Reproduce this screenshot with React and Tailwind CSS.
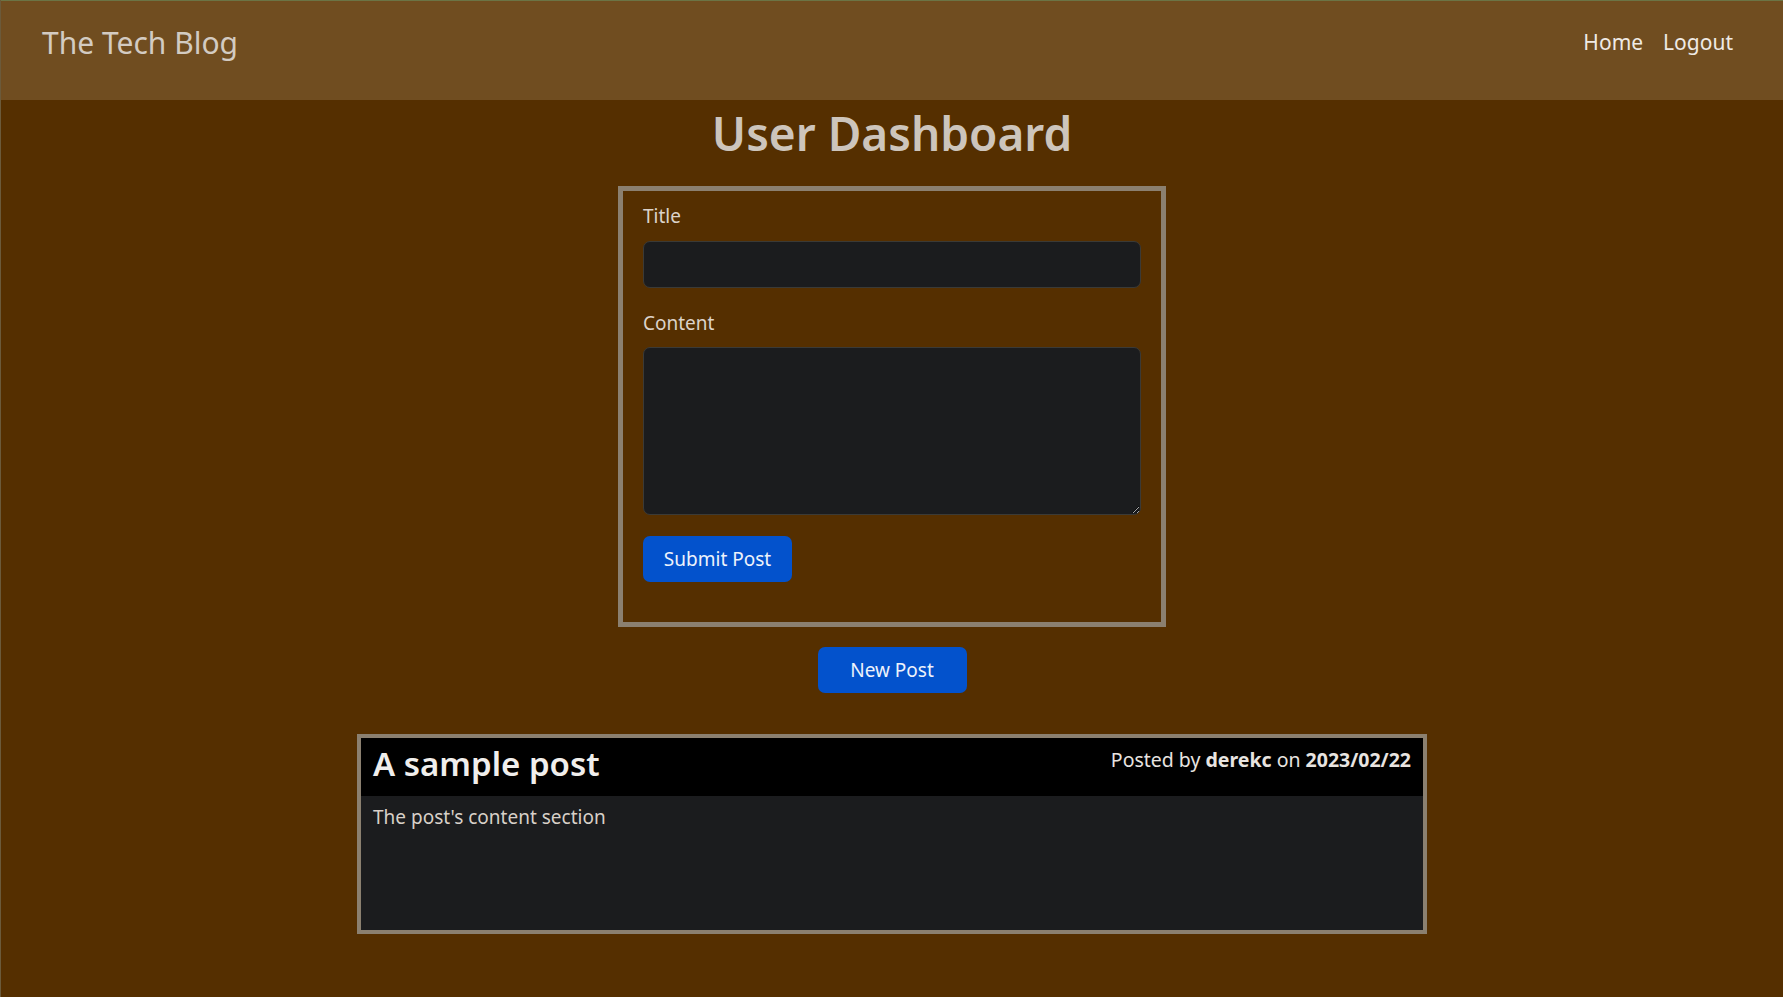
import React from 'react';

const font = { fontFamily: '"Noto Sans", "Open Sans", sans-serif' };

const Navbar = () => (
  <nav className="h-[100px] bg-[#704d20] border-t border-[#6b7445] flex items-start justify-between pl-[41px] pr-[50px]">
    <a href="#" className="pt-[27px] text-[30px] leading-none text-[#d3cbc2]">The Tech Blog</a>
    <div className="flex gap-[20px] pt-[31px] text-[21px] leading-none text-[#efeae5]">
      <a href="#">Home</a>
      <a href="#">Logout</a>
    </div>
  </nav>
);

const PostForm = () => (
  <form className="w-[548px] border-[5px] border-[#8b8070] px-[20px] pt-[12px] pb-[40px]" onSubmit={e => e.preventDefault()}>
    <label className="block text-[19px] leading-[27px] text-[#dcd3ca]">Title</label>
    <input type="text" className="mt-[11px] block w-full h-[47px] rounded-[7px] bg-[#1b1c1e] border border-[#3b3a36]" />
    <label className="mt-[22px] block text-[19px] leading-[27px] text-[#dcd3ca]">Content</label>
    <textarea className="mt-[10px] block w-full h-[168px] rounded-[7px] bg-[#1b1c1e] border border-[#3b3a36]" />
    <button type="submit" className="mt-[21px] w-[149px] h-[46px] rounded-[7px] bg-[#0352cc] text-[19px] text-[#eef2fb]">
      Submit Post
    </button>
  </form>
);

const PostCard = () => (
  <div className="w-[1070px] border-4 border-[#8b8070]">
    {/* Post header */}
    <div className="h-[58px] bg-black flex items-start justify-between px-[12px]">
      <h2 className="pt-[9px] text-[33px] leading-none font-semibold text-[#f0eeec]">A sample post</h2>
      <p className="pt-[12px] text-[19.5px] leading-none text-[#e8e4e0]">
        Posted by <b>derekc</b> on <b>2023/02/22</b>
      </p>
    </div>
    {/* Post content */}
    <div className="h-[134px] bg-[#1b1c1e] px-[12px] pt-[8px] text-[19px] leading-[27px] text-[#d8d0c8]">
      The post's content section
    </div>
  </div>
);

export default function App() {
  return (
    <div className="min-h-screen bg-[#552f00] border-l border-[#6b5a3a]" style={font}>
      <Navbar />
      <main className="flex flex-col items-center pb-[60px]">
        <h1 className="mt-[2px] mb-[21px] text-[46px] leading-[63px] font-semibold text-[#cdc5bc]">User Dashboard</h1>
        <PostForm />
        <button className="mt-[20px] w-[149px] h-[46px] rounded-[7px] bg-[#0352cc] text-[19px] text-[#eef2fb]">New Post</button>
        <div className="mt-[41px]">
          <PostCard />
        </div>
      </main>
    </div>
  );
}
